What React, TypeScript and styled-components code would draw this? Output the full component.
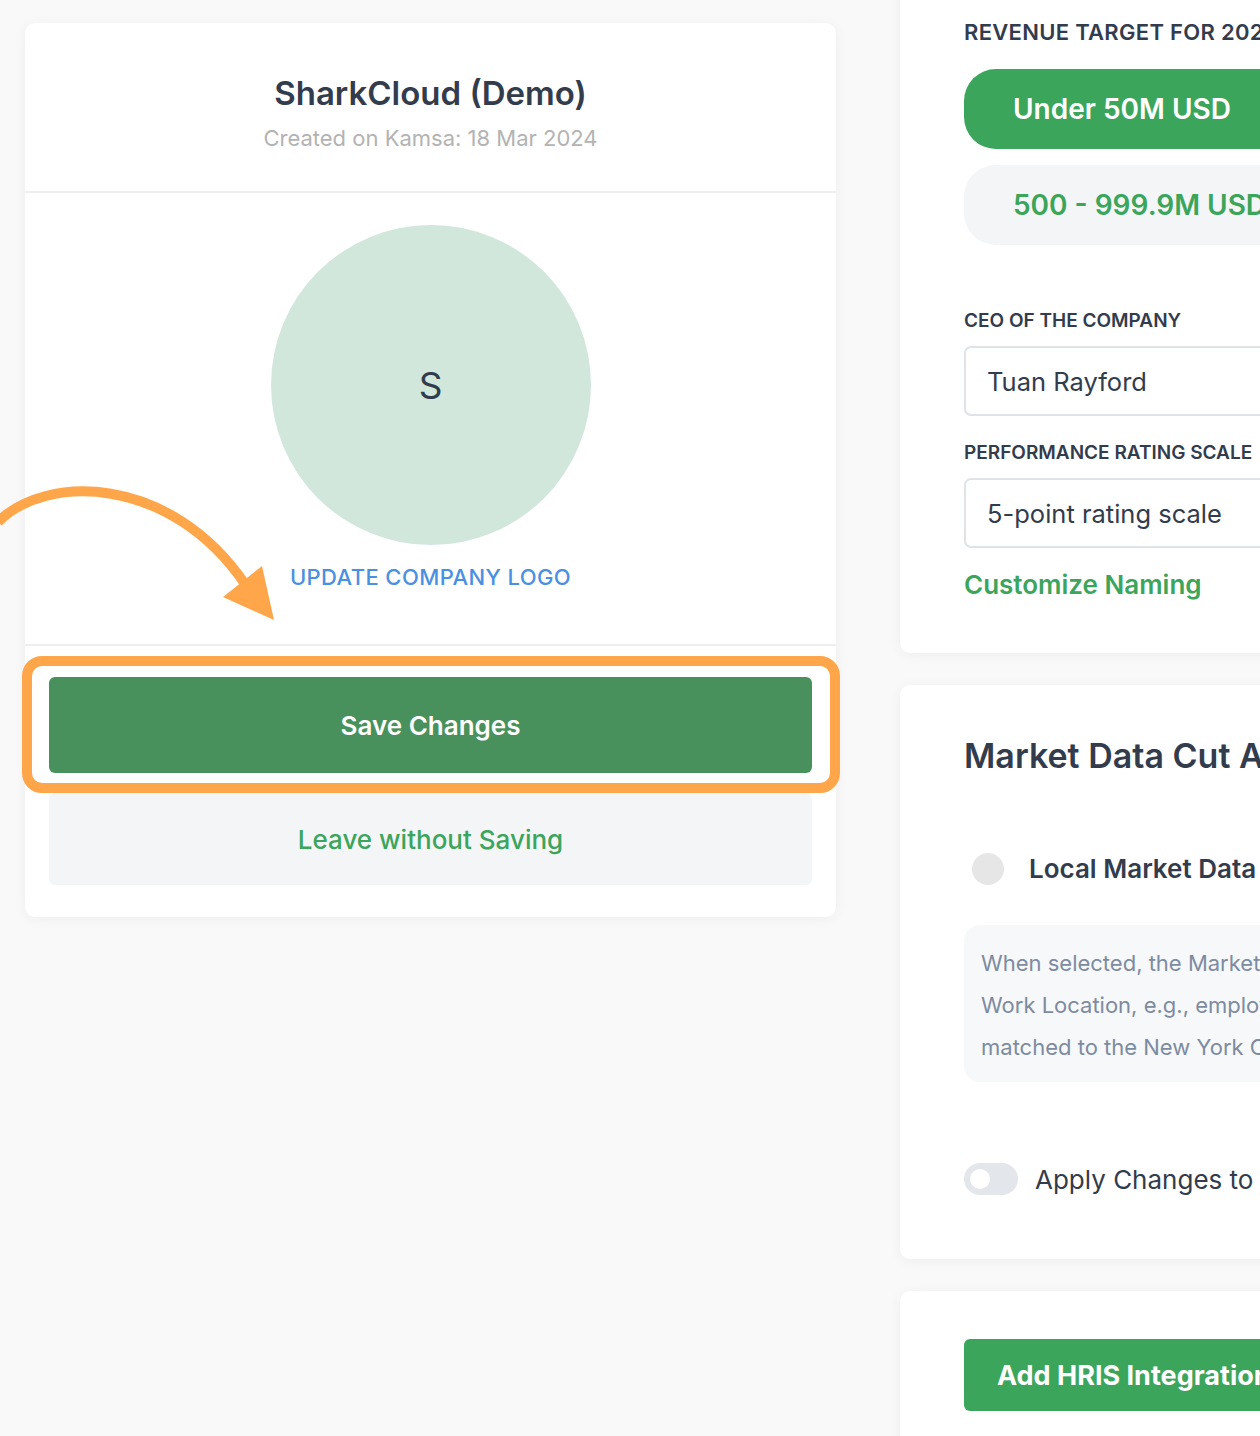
import React, { FC } from 'react';
import styled, { createGlobalStyle } from 'styled-components';

const GlobalStyle = createGlobalStyle`
    html, body {
        margin: 0;
        padding: 0;
        background: #f9f9f9;
        font-family: 'Inter', 'Lato', sans-serif;
        color: #323c4c;
        overflow: hidden;
    }
    * {
        box-sizing: border-box;
    }
`;

const Page = styled.div`
    position: relative;
    width: 1260px;
    height: 1436px;
    overflow: hidden;
    display: flex;
    align-items: flex-start;
    gap: 64px;
    padding-left: 25px;
`;

const Card = styled.div`
    background: #ffffff;
    border-radius: 10px;
    box-shadow: 0 2px 14px rgba(0, 0, 0, 0.05);
`;

const ProfileCard = styled(Card)`
    width: 811px;
    flex-shrink: 0;
    margin-top: 23px;
`;

const ProfileHeader = styled.div`
    padding: 50px 0 39px;
    text-align: center;
    border-bottom: 2px solid #eceef2;
`;

const CompanyName = styled.h1`
    margin: 0;
    font-size: 33px;
    line-height: 40px;
    font-weight: 600;
    color: #323c4c;
`;

const CreatedOn = styled.div`
    margin-top: 11px;
    font-size: 22px;
    line-height: 28px;
    color: #b3b3b3;
`;

const LogoSection = styled.div`
    padding: 32px 0 53px;
    display: flex;
    flex-direction: column;
    align-items: center;
    border-bottom: 2px solid #eceef2;
`;

const Avatar = styled.div`
    width: 320px;
    height: 320px;
    border-radius: 50%;
    background: #d1e7dc;
    display: flex;
    align-items: center;
    justify-content: center;
    font-size: 37px;
    color: #323c4c;
`;

const UpdateLogo = styled.a`
    margin-top: 18px;
    font-size: 22px;
    line-height: 28px;
    font-weight: 500;
    letter-spacing: 0.4px;
    color: #4a90e2;
    text-transform: uppercase;
    text-decoration: none;
`;

const Actions = styled.div`
    padding: 31px 24px 32px;
    display: flex;
    flex-direction: column;
    gap: 20px;
`;

const SaveWrap = styled.div`
    position: relative;
`;

const Highlight = styled.div`
    position: absolute;
    top: -21px;
    left: -27px;
    right: -28px;
    bottom: -20px;
    border: 10px solid #ffa64b;
    border-radius: 20px;
    pointer-events: none;
`;

const ActionButton = styled.button<{ $primary?: boolean }>`
    width: 100%;
    height: ${(p) => (p.$primary ? '96px' : '92px')};
    border: none;
    border-radius: 6px;
    font-family: inherit;
    font-size: 26px;
    font-weight: ${(p) => (p.$primary ? 600 : 500)};
    background: ${(p) => (p.$primary ? '#48915c' : '#f4f5f7')};
    color: ${(p) => (p.$primary ? '#ffffff' : '#3ba55c')};
    cursor: pointer;
`;

const Arrow = styled.svg`
    position: absolute;
    left: 0;
    top: 460px;
    pointer-events: none;
`;

const RightColumn = styled.div`
    width: 860px;
    flex-shrink: 0;
    margin-top: -30px;
    display: flex;
    flex-direction: column;
    gap: 32px;
`;

const SettingsCard = styled(Card)<{ $top: number; $bottom: number }>`
    padding: ${(p) => p.$top}px 64px ${(p) => p.$bottom}px;
`;

const SectionLabel = styled.div<{ $big?: boolean; $gap?: number }>`
    margin-top: ${(p) => p.$gap || 0}px;
    font-size: ${(p) => (p.$big ? '22px' : '19px')};
    line-height: ${(p) => (p.$big ? '28px' : '24px')};
    letter-spacing: ${(p) => (p.$big ? '0.3px' : '0')};
    font-weight: 600;
    text-transform: uppercase;
    color: #323c4c;
    white-space: nowrap;
`;

const PillGrid = styled.div`
    margin-top: 23px;
    display: grid;
    grid-template-columns: repeat(2, 380px);
    gap: 16px 20px;
`;

const Pill = styled.div<{ $active?: boolean }>`
    height: 80px;
    border-radius: 32px;
    padding-left: 49px;
    display: flex;
    align-items: center;
    font-size: 28px;
    font-weight: 600;
    white-space: nowrap;
    background: ${(p) => (p.$active ? '#3ba55c' : '#f4f5f7')};
    color: ${(p) => (p.$active ? '#ffffff' : '#3ba55c')};
`;

const Field = styled.div`
    margin-top: 13px;
    height: 70px;
    width: 600px;
    border: 2px solid #dfe2e6;
    border-radius: 7px;
    padding-left: 21px;
    display: flex;
    align-items: center;
    font-size: 25.5px;
    color: #323c4c;
`;

const TextLink = styled.a`
    display: block;
    margin-top: 21px;
    font-size: 26px;
    line-height: 32px;
    font-weight: 600;
    color: #3ba55c;
    text-decoration: none;
`;

const CardTitle = styled.h2`
    margin: 0;
    font-size: 34px;
    line-height: 44px;
    font-weight: 600;
    color: #323c4c;
    white-space: nowrap;
`;

const RadioRow = styled.div`
    margin-top: 75px;
    padding-left: 8px;
    display: flex;
    align-items: center;
    gap: 25px;
`;

const RadioDot = styled.span`
    width: 32px;
    height: 32px;
    border-radius: 50%;
    background: #e6e6e6;
    flex-shrink: 0;
`;

const RadioLabel = styled.span`
    font-size: 26px;
    line-height: 32px;
    font-weight: 600;
    color: #323c4c;
    white-space: nowrap;
`;

const InfoBox = styled.div`
    margin-top: 40px;
    padding: 17px 17px 14px;
    background: #f6f8f9;
    border-radius: 16px;
    font-size: 22px;
    line-height: 42px;
    color: #7d8ba1;
    white-space: nowrap;
`;

const ToggleRow = styled.div`
    margin-top: 81px;
    display: flex;
    align-items: center;
    gap: 17px;
`;

const Toggle = styled.span`
    position: relative;
    width: 54px;
    height: 32px;
    border-radius: 16px;
    background: #e3e6ea;
    flex-shrink: 0;

    &::after {
        content: '';
        position: absolute;
        left: 6px;
        top: 6px;
        width: 20px;
        height: 20px;
        border-radius: 50%;
        background: #ffffff;
    }
`;

const ToggleLabel = styled.span`
    font-size: 26px;
    color: #323c4c;
    white-space: nowrap;
`;

const GreenButton = styled.button`
    height: 72px;
    padding: 0 33px;
    border: none;
    border-radius: 6px;
    background: #3ba55c;
    color: #ffffff;
    font-family: inherit;
    font-size: 27px;
    font-weight: 700;
    white-space: nowrap;
`;

const REVENUE_OPTIONS = [
    { label: 'Under 50M USD', active: true },
    { label: '50 - 499.9M USD', active: false },
    { label: '500 - 999.9M USD', active: false },
    { label: 'Over 1B USD', active: false },
];

const App: FC = () => {
    return (
        <>
            <GlobalStyle />
            <Page>
                <ProfileCard>
                    <ProfileHeader>
                        <CompanyName>SharkCloud (Demo)</CompanyName>
                        <CreatedOn>Created on Kamsa: 18 Mar 2024</CreatedOn>
                    </ProfileHeader>
                    <LogoSection>
                        <Avatar>S</Avatar>
                        <UpdateLogo href="#logo">Update Company Logo</UpdateLogo>
                    </LogoSection>
                    <Actions>
                        <SaveWrap>
                            <ActionButton $primary>Save Changes</ActionButton>
                            <Highlight />
                        </SaveWrap>
                        <ActionButton>Leave without Saving</ActionButton>
                    </Actions>
                </ProfileCard>

                <RightColumn>
                    <SettingsCard $top={48} $bottom={52}>
                        <SectionLabel $big>Revenue Target for 2024</SectionLabel>
                        <PillGrid>
                            {REVENUE_OPTIONS.map((item) => (
                                <Pill key={item.label} $active={item.active}>
                                    {item.label}
                                </Pill>
                            ))}
                        </PillGrid>
                        <SectionLabel $gap={64}>CEO of the Company</SectionLabel>
                        <Field>Tuan Rayford</Field>
                        <SectionLabel $gap={25}>Performance Rating Scale</SectionLabel>
                        <Field>5-point rating scale</Field>
                        <TextLink href="#naming">Customize Naming</TextLink>
                    </SettingsCard>

                    <SettingsCard $top={49} $bottom={64}>
                        <CardTitle>Market Data Cut Assignment</CardTitle>
                        <RadioRow>
                            <RadioDot />
                            <RadioLabel>Local Market Data</RadioLabel>
                        </RadioRow>
                        <InfoBox>
                            When selected, the Market Data Cut is assigned by each employee's
                            <br />
                            Work Location, e.g., employees working in New York City are
                            <br />
                            matched to the New York City market data.
                        </InfoBox>
                        <ToggleRow>
                            <Toggle />
                            <ToggleLabel>Apply Changes to All Employees</ToggleLabel>
                        </ToggleRow>
                    </SettingsCard>

                    <SettingsCard $top={48} $bottom={48}>
                        <GreenButton>Add HRIS Integration</GreenButton>
                    </SettingsCard>
                </RightColumn>

                <Arrow width="290" height="180" viewBox="0 0 290 180">
                    <path
                        d="M -2 62 C 45 14, 170 14, 245 124"
                        fill="none"
                        stroke="#ffa64b"
                        strokeWidth="10"
                    />
                    <polygon points="223,137 262,106 274,160" fill="#ffa64b" />
                </Arrow>
            </Page>
        </>
    );
};

export default App;
